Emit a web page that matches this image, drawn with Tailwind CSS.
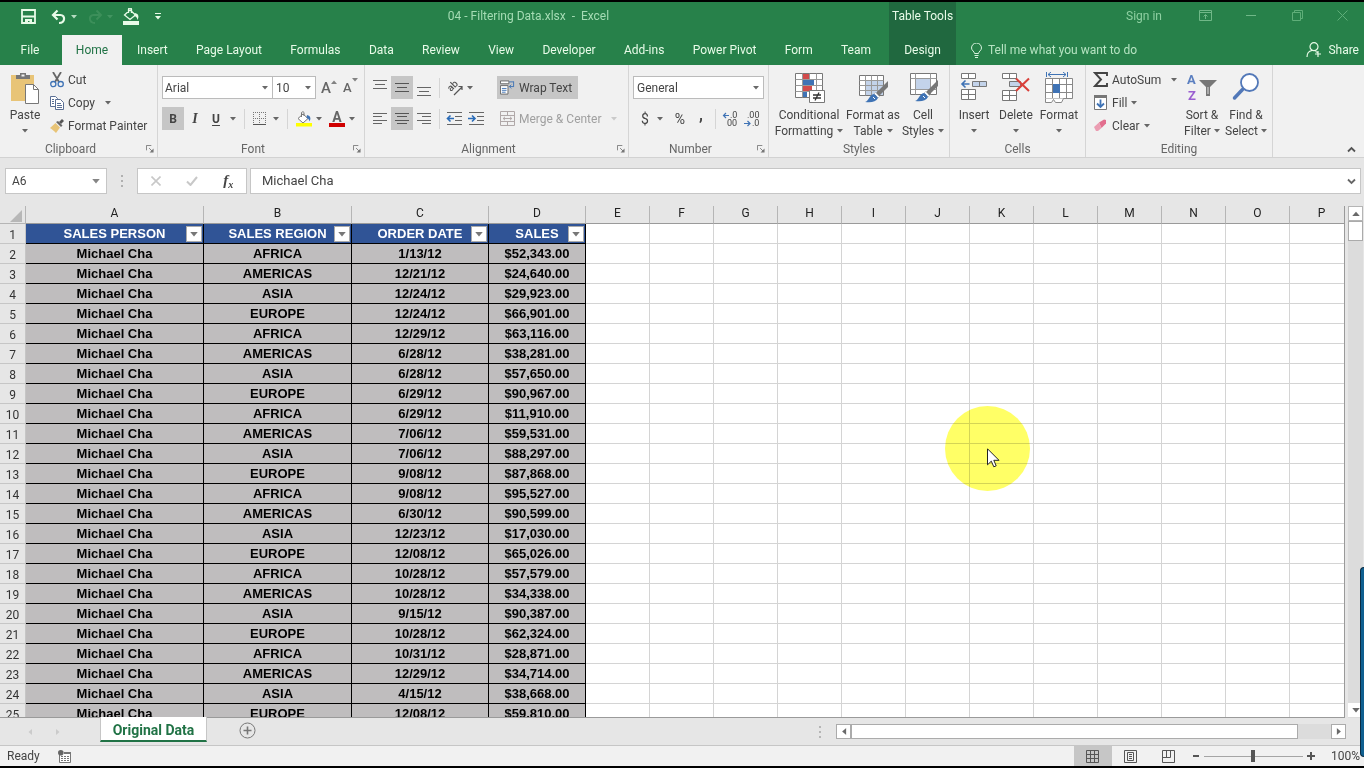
<!DOCTYPE html>
<html lang="en">
<head>
    <meta charset="UTF-8">
    <meta name="viewport" content="width=device-width, initial-scale=1.0">
    <title>04 - Filtering Data.xlsx - Excel</title>
    <script src="https://cdn.jsdelivr.net/npm/@tailwindcss/browser@4"></script>
</head>
<body class="relative flex h-screen flex-col overflow-hidden border-y-2 border-black bg-[#e6e6e6] font-['Roboto','Liberation_Sans',sans-serif] text-xs text-[#444]">
    <!-- Shared icons -->
    <svg class="hidden">
        <symbol id="caret" viewBox="0 0 6 4"><path d="M0 0h6L3 3.5z" fill="currentColor" fill-opacity=".8"/></symbol>
        <symbol id="launcher" viewBox="0 0 9 9"><path d="M.5 6V.5H6M3.5 3.5 7 7" fill="none" stroke="#777"/><path d="M8.500 4v4.500H4z" fill="#777"/></symbol>
        <symbol id="brush" viewBox="0 0 24 22"><path d="M23 0v6l-9 9-3-3z" fill="#777"/><path d="m10.500 11.500 4 4-1.500 1.500-4-4z" fill="#fff" stroke="#999" stroke-width=".5"/><path d="M9 13c2 1 3 2 4 4-2 4-7 5-13 4 4-1 4-7 9-8z" fill="#3f73b5"/><path d="m8 16 2 2" stroke="#fff"/></symbol>
    </svg>

    <!-- Title bar -->
    <header class="bg-[#27814a] text-[#d9f2df]">
        <div class="flex h-[33px]">
            <div class="flex w-[889px] items-center">
                <div class="flex w-[168px] items-center pb-1 pl-[18px]">
                    <button class="flex w-[22px] justify-center" aria-label="Save">
                        <svg class="h-[15px] w-[15px]" viewBox="0 0 15 15"><path d="M1 1h13v13H1zM1 7.500h13" fill="none" stroke="#e8fbe8" stroke-width="1.800"/><path d="M4 10h7v4H8.500v-2H7v2H4z" fill="#e8fbe8"/></svg>
                    </button>
                    <button class="ml-2.5 flex w-[30px] items-center justify-center gap-1" aria-label="Undo">
                        <svg class="h-4 w-4" viewBox="0 0 16 16"><path d="M2 6h7.500c5 0 5 8-1.500 8M6.500 1.500 2 6l4.500 4.500" fill="none" stroke="#e8fbe8" stroke-width="2.200"/></svg>
                        <svg class="h-1 w-1.5"><use href="#caret"/></svg>
                    </button>
                    <button class="ml-1.5 flex w-[30px] items-center justify-center gap-1 text-[#4a9866]" aria-label="Redo">
                        <svg class="h-4 w-4" viewBox="0 0 16 16"><path d="M14 6H6.500c-5 0-5 8 1.500 8M9.500 1.500 14 6l-4.500 4.500" fill="none" stroke="#3c8f5a" stroke-width="2"/></svg>
                        <svg class="h-1 w-1.5"><use href="#caret"/></svg>
                    </button>
                    <button class="ml-1.5 flex w-5 justify-center" aria-label="Fill color">
                        <svg class="h-[17px] w-4" viewBox="0 0 16 17"><path d="M7 2 1.500 7 7 11.500 12.500 7zM5.500 5V1.500a1.500 1.500 0 0 1 3 0V5" fill="none" stroke="#e8fbe8" stroke-width="1.300"/><path d="M12 5c4 1 4 4 2.500 7C14 9 12.500 8 11 8zM0 13h16v4H0z" fill="#e8fbe8"/></svg>
                    </button>
                    <button class="ml-2 flex w-5 justify-center" aria-label="Customize Quick Access Toolbar">
                        <svg class="h-[7px] w-1.5" viewBox="0 0 6 7"><path d="M0 0h6v1H0zM0 3h6L3 6.500z" fill="#e8fbe8"/></svg>
                    </button>
                </div>
                <h1 class="flex-1 pb-1.5 text-center whitespace-pre text-[#a5dcb4]">04 - Filtering Data.xlsx  -  Excel</h1>
            </div>
            <div class="w-[67px] bg-[#20683f] pt-1.5 text-center leading-4 text-[#e8fbe8]">Table Tools</div>
            <div class="flex flex-1 items-center justify-end pb-1.5 text-[#8fd0a2]">
                <button class="mr-5">Sign in</button>
                <button class="flex w-[46px] justify-center" aria-label="Ribbon display options">
                    <svg class="h-[11px] w-[13px]" viewBox="0 0 13 11"><path d="M.5.5h12v10H.5zM.5 2.500h12M6.500 9V5M4.500 6.500l2-2 2 2" fill="none" stroke="#70b888"/></svg>
                </button>
                <button class="flex w-[46px] justify-center" aria-label="Minimize"><span class="h-px w-2.5 bg-[#70b888]"></span></button>
                <button class="flex w-[46px] justify-center" aria-label="Restore">
                    <svg class="h-[11px] w-[11px]" viewBox="0 0 11 11"><path d="M.5 2.500h8v8h-8zM2.500 2.500v-2h8v8h-2" fill="none" stroke="#5fae79"/></svg>
                </button>
                <button class="flex w-11 justify-center" aria-label="Close">
                    <svg class="h-[11px] w-[11px]" viewBox="0 0 11 11"><path d="m.5.5 10 10m0-10-10 10" fill="none" stroke="#5fae79"/></svg>
                </button>
            </div>
        </div>

        <!-- Ribbon tabs -->
        <nav class="flex h-[30px] text-[#e8fbe8]">
            <button class="w-[60px]">File</button>
            <button class="ml-0.5 w-[60px] bg-[#f1f1f1] text-[#217346]">Home</button>
            <div class="flex w-[767px] justify-between pr-1 pl-px">
                <button class="px-3.5">Insert</button>
                <button class="px-3.5">Page Layout</button>
                <button class="px-3.5">Formulas</button>
                <button class="px-3.5">Data</button>
                <button class="px-3.5">Review</button>
                <button class="px-3.5">View</button>
                <button class="px-3.5">Developer</button>
                <button class="px-3.5">Add-ins</button>
                <button class="px-3.5">Power Pivot</button>
                <button class="px-3.5">Form</button>
                <button class="px-3.5">Team</button>
            </div>
            <button class="w-[67px] bg-[#20683f]">Design</button>
            <button class="ml-[15px] flex items-center gap-1.5 text-[#b5e3c1]">
                <svg class="h-[15px] w-[11px]" viewBox="0 0 11 15"><path d="M3.500 10.500c0-2-3-3-3-5.500a5 5 0 0 1 10 0c0 2.500-3 3.500-3 5.500zM3.500 12.500h4M4 14.500h3" fill="none" stroke="#d9f2df"/></svg>
                Tell me what you want to do
            </button>
            <button class="ml-auto flex items-center gap-1.5 pr-[5px]">
                <svg class="h-4 w-4" viewBox="0 0 16 16"><path d="M1 15c0-4 2-6 5-6.500M8 .7a4 4 0 1 1 0 8 4 4 0 0 1 0-8zM9.500 9.500l2 1M12 9v6M9 12h6" fill="none" stroke="#e8fbe8" stroke-width="1.200"/></svg>
                Share
            </button>
        </nav>
    </header>

    <!-- Ribbon -->
    <section class="flex h-[93px] border-b border-[#d2d2d2] bg-[#f1f1f1]">
        <!-- Clipboard -->
        <div class="flex w-[157px] flex-col">
            <div class="flex h-[76px] pt-[3px]">
                <button class="ml-1 flex w-[42px] flex-col items-center pt-1 leading-4">
                    <svg class="mb-[3px] h-8 w-7" viewBox="0 0 28 32"><path d="M0 3h23v26H0z" fill="#e8c477"/><path d="M5 7V3h4V1h6v2h4v4z" fill="#777"/><path d="M10.500 2.500h3v2h-3z" fill="#f1f1f1"/><path d="M14.500 12.500h8l5 5v14h-13z" fill="#fff" stroke="#777"/><path d="M22.500 12.500v5h5" fill="none" stroke="#777"/></svg>
                    Paste
                    <svg class="mt-1.5 h-1 w-1.5"><use href="#caret"/></svg>
                </button>
                <div class="ml-1 flex flex-col">
                    <button class="flex h-[23px] items-center gap-1">
                        <svg class="h-4 w-[14px]" viewBox="0 0 14 16"><path d="m3 0 6 10M11 0 5 10" stroke="#666" stroke-width="1.800"/><path d="M3.300 9.500a2.600 2.600 0 1 1 0 5.200 2.600 2.600 0 0 1 0-5.200zM10.700 9.500a2.600 2.600 0 1 1 0 5.200 2.600 2.600 0 0 1 0-5.200z" fill="none" stroke="#3f73b5" stroke-width="1.300"/></svg>
                        Cut
                    </button>
                    <button class="flex h-[23px] items-center gap-1">
                        <svg class="h-[14px] w-[14px]" viewBox="0 0 14 14"><path d="M.5.5h5l2 2v8h-7z" fill="#fff" stroke="#5a6f94"/><path d="M5.500 3.500h5l3 3v7h-8z" fill="#fff" stroke="#5a6f94"/><path d="M2 3.500h2M2 5.500h2M2 7.500h2M7 7.500h4M7 9.500h5M7 11.500h5" stroke="#5a6f94"/></svg>
                        Copy
                        <svg class="ml-1.5 h-1 w-1.5"><use href="#caret"/></svg>
                    </button>
                    <button class="flex h-[23px] items-center gap-1">
                        <svg class="h-[14px] w-[14px]" viewBox="0 0 14 14"><path d="m12 0 2 2-3 3-2-2z" fill="#555"/><path d="m6 3 2-1 4.500 4.500L11 8z" fill="#666"/><path d="M5.500 4 10 8.500 6 14C4 12 2 10 0 9z" fill="#e8c477"/></svg>
                        Format Painter
                    </button>
                </div>
            </div>
            <div class="flex h-4 items-center text-[#666]"><span class="flex-1 text-center">Clipboard</span><button class="w-4 pl-1.5" aria-label="Clipboard settings"><svg class="-ml-px h-2 w-2"><use href="#launcher"/></svg></button></div>
        </div>

        <!-- Font -->
        <div class="flex w-[207px] flex-col border-l border-[#d5d5d5]">
            <div class="flex h-[76px] flex-col gap-2 pt-[11px] pl-1">
                <div class="flex h-[23px] items-center">
                    <div class="relative flex h-[23px] w-[111px] items-center border border-[#bbb] bg-white">
                        <select class="w-full appearance-none pl-0.5" aria-label="Font"><option>Arial</option></select>
                        <svg class="pointer-events-none absolute right-1 h-1 w-1.5"><use href="#caret"/></svg>
                    </div>
                    <div class="relative flex h-[23px] w-[43px] items-center border border-l-0 border-[#bbb] bg-white">
                        <select class="w-full appearance-none pl-[3px]" aria-label="Font size"><option>10</option></select>
                        <svg class="pointer-events-none absolute right-1 h-1 w-1.5"><use href="#caret"/></svg>
                    </div>
                    <button class="ml-[5px] flex w-[22px] text-[15px] leading-5 font-medium text-[#666]" aria-label="Increase font size">A<svg class="mt-0.5 h-1 w-1.5 rotate-180"><use href="#caret"/></svg></button>
                    <button class="flex text-[13px] leading-5 font-medium text-[#666]" aria-label="Decrease font size">A<svg class="h-1 w-1.5"><use href="#caret"/></svg></button>
                </div>
                <div class="flex h-[23px] items-center">
                    <button class="h-[23px] w-[22px] bg-[#c6c6c6] font-bold">B</button>
                    <button class="w-[22px] font-['Liberation_Serif',serif] text-sm font-bold italic">I</button>
                    <button class="w-5 font-bold underline underline-offset-2">U</button>
                    <button class="flex w-[14px] justify-center" aria-label="Underline options"><svg class="h-1 w-1.5"><use href="#caret"/></svg></button>
                    <span class="ml-1 h-5 w-px bg-[#d5d5d5]"></span>
                    <button class="ml-2 flex w-[33px] items-center gap-1.5" aria-label="Borders">
                        <svg class="h-[14px] w-[14px]" viewBox="0 0 14 14"><path d="M.5 0v13M6.500 0v13M12.500 0v13M0 .5h13M0 6.500h13" stroke="#777" stroke-dasharray="1 1"/><path d="M0 12.500h13" stroke="#555"/></svg>
                        <svg class="h-1 w-1.5"><use href="#caret"/></svg>
                    </button>
                    <span class="ml-px h-5 w-px bg-[#d5d5d5]"></span>
                    <button class="ml-2 flex w-8 items-center gap-1" aria-label="Fill color">
                        <svg class="h-4 w-4" viewBox="0 0 16 16"><path d="M7 3 2 7.500 7 12l5-4.500z" fill="#fff" stroke="#777"/><path d="M5.500 6V1.500a1.500 1.500 0 0 1 2.500 0V5" fill="none" stroke="#777"/><path d="M11 4c4 1 4 4 2.500 6.500C13 8.500 12 7 10.500 7z" fill="#3f73b5"/><path d="M0 12h16v3.500H0z" fill="#ff0"/></svg>
                        <svg class="h-1 w-1.5"><use href="#caret"/></svg>
                    </button>
                    <button class="ml-px flex w-8 items-center gap-1" aria-label="Font color">
                        <span class="w-4 border-b-4 border-[#d00000] text-sm leading-3 font-bold text-[#666]">A</span>
                        <svg class="h-1 w-1.5"><use href="#caret"/></svg>
                    </button>
                </div>
            </div>
            <div class="flex h-4 items-center text-[#666]"><span class="flex-1 text-center">Font</span><button class="w-4 pl-1.5" aria-label="Font settings"><svg class="-ml-px h-2 w-2"><use href="#launcher"/></svg></button></div>
        </div>

        <!-- Alignment -->
        <div class="flex w-[264px] flex-col border-l border-[#d5d5d5]">
            <div class="flex h-[76px] flex-col gap-2 pt-[11px] pl-1">
                <div class="flex h-[23px] items-center">
                    <button class="flex h-[23px] w-[22px] items-center justify-center" aria-label="Top align"><svg class="mb-1.5 h-[13px] w-[14px]" viewBox="0 0 14 13"><path d="M0 2.500h14M2 6.500h10M0 10.500h14" stroke="#666"/></svg></button>
                    <button class="flex h-[23px] w-[22px] items-center justify-center bg-[#c6c6c6]" aria-label="Middle align"><svg class="h-[13px] w-[14px]" viewBox="0 0 14 13"><path d="M0 2.500h14M2 6.500h10M0 10.500h14" stroke="#555"/></svg></button>
                    <button class="flex h-[23px] w-[22px] items-center justify-center" aria-label="Bottom align"><svg class="mt-2 h-[13px] w-[14px]" viewBox="0 0 14 13"><path d="M0 2.500h14M2 6.500h10M0 10.500h14" stroke="#666"/></svg></button>
                    <span class="ml-1 h-5 w-px bg-[#d5d5d5]"></span>
                    <button class="ml-1.5 flex w-[45px] items-center gap-1" aria-label="Orientation">
                        <svg class="h-4 w-[17px] overflow-visible" viewBox="0 0 17 16"><text x="0" y="0" transform="translate(5 12) rotate(-45)" font-size="10" font-weight="500" fill="#555">ab</text><path d="m8 15 8-8M12.500 6.500H16V10" fill="none" stroke="#555" stroke-width="1.200"/></svg>
                        <svg class="h-1 w-1.5"><use href="#caret"/></svg>
                    </button>
                    <button class="ml-1.5 flex h-[23px] w-[81px] items-center gap-1 bg-[#c6c6c6] pl-[3px] whitespace-nowrap">
                        <svg class="h-[15px] w-[15px]" viewBox="0 0 16 15"><path d="M.5.5h9v3h-9zM.5 5.500h8v9h-8z" fill="#fff" stroke="#666"/><path d="M2 8.500h5M2 10.500h5M2 12.500h4M10 1.500h4.500" stroke="#3f73b5"/><path d="M14.500 1v5M15 6.500h-5m2-2-2 2 2 2" fill="none" stroke="#3f73b5"/></svg>
                        Wrap Text
                    </button>
                </div>
                <div class="flex h-[23px] items-center">
                    <button class="flex h-[23px] w-[22px] items-center justify-center" aria-label="Align left"><svg class="h-[13px] w-[14px]" viewBox="0 0 14 13"><path d="M0 1.500h14M0 4.500h9M0 8.500h14M0 11.500h9" stroke="#666"/></svg></button>
                    <button class="flex h-[23px] w-[22px] items-center justify-center bg-[#c6c6c6]" aria-label="Center"><svg class="h-[13px] w-[14px]" viewBox="0 0 14 13"><path d="M0 1.500h14M2 4.500h10M0 8.500h14M2 11.500h10" stroke="#555"/></svg></button>
                    <button class="flex h-[23px] w-[22px] items-center justify-center" aria-label="Align right"><svg class="h-[13px] w-[14px]" viewBox="0 0 14 13"><path d="M0 1.500h14M5 4.500h9M0 8.500h14M5 11.500h9" stroke="#666"/></svg></button>
                    <span class="ml-1 h-5 w-px bg-[#d5d5d5]"></span>
                    <button class="ml-1.5 flex w-[22px]" aria-label="Decrease indent"><svg class="h-[13px] w-4" viewBox="0 0 16 13"><path d="M1 .5h15M9 4.500h7M9 8.500h7M1 12.500h15" stroke="#666"/><path d="M1.500 6.500H8M4.500 3.500l-3 3 3 3" fill="none" stroke="#2b6cb8" stroke-width="1.600"/></svg></button>
                    <button class="flex w-[23px]" aria-label="Increase indent"><svg class="h-[13px] w-4" viewBox="0 0 16 13"><path d="M1 .5h15M9 4.500h7M9 8.500h7M1 12.500h15" stroke="#666"/><path d="M0 6.500h6.500M4 3.500l3 3-3 3" fill="none" stroke="#2b6cb8" stroke-width="1.600"/></svg></button>
                    <button class="ml-[9px] flex items-center gap-1 whitespace-nowrap text-[#a0a0a0]">
                        <svg class="h-[15px] w-[15px]" viewBox="0 0 15 15"><path d="M.5.5h14v14H.5zM.5 4.500h14M.5 10.500h14M7.500.5v4M7.500 10.500v4M3 7.500h9M5 5.800 3.200 7.500 5 9.200M10 5.800l1.800 1.700L10 9.200" fill="none" stroke="#b0a8a8"/></svg>
                        Merge &amp; Center
                        <svg class="ml-1.5 h-1 w-1.5 text-[#c0c0c0]"><use href="#caret"/></svg>
                    </button>
                </div>
            </div>
            <div class="flex h-4 items-center text-[#666]"><span class="flex-1 text-center">Alignment</span><button class="w-4 pl-1.5" aria-label="Alignment settings"><svg class="-ml-px h-2 w-2"><use href="#launcher"/></svg></button></div>
        </div>

        <!-- Number -->
        <div class="flex w-[140px] flex-col border-l border-[#d5d5d5]">
            <div class="flex h-[76px] flex-col gap-2 pt-[11px] pl-1">
                <div class="relative flex h-[23px] w-[131px] items-center border border-[#bbb] bg-white">
                    <select class="w-full appearance-none pl-[3px]" aria-label="Number format"><option>General</option></select>
                    <svg class="pointer-events-none absolute right-1 h-1 w-1.5"><use href="#caret"/></svg>
                </div>
                <div class="flex h-[23px] items-center">
                    <button class="flex w-9 items-center gap-2 pl-2 text-sm" aria-label="Accounting format">$<svg class="h-1 w-1.5"><use href="#caret"/></svg></button>
                    <button class="w-[22px] text-sm" aria-label="Percent style">%</button>
                    <button class="w-5 pb-2 text-base font-bold" aria-label="Comma style">,</button>
                    <span class="ml-1 h-5 w-px bg-[#d5d5d5]"></span>
                    <button class="ml-1.5 flex w-[22px]" aria-label="Increase decimal"><svg class="h-4 w-4" viewBox="0 0 16 16"><path d="M1 4.500h6M4 2 1.500 4.500 4 7" fill="none" stroke="#3f73b5" stroke-width="1.200"/><text x="8" y="7" font-size="9" fill="#444">.0</text><text x="5" y="15" font-size="9" fill="#444">00</text></svg></button>
                    <button class="flex" aria-label="Decrease decimal"><svg class="h-4 w-4" viewBox="0 0 16 16"><text x="3" y="7" font-size="9" fill="#444">.00</text><path d="M0 12.500h6M3.500 10 6 12.500 3.500 15" fill="none" stroke="#3f73b5" stroke-width="1.200"/><text x="8" y="15" font-size="9" fill="#444">.0</text></svg></button>
                </div>
            </div>
            <div class="flex h-4 items-center text-[#666]"><span class="flex-1 text-center">Number</span><button class="w-4 pl-1.5" aria-label="Number settings"><svg class="-ml-px h-2 w-2"><use href="#launcher"/></svg></button></div>
        </div>

        <!-- Styles -->
        <div class="flex w-[181px] flex-col border-l border-[#d5d5d5]">
            <div class="flex h-[76px] pt-[7px] pl-[5px] leading-4">
                <button class="flex w-[70px] flex-col items-center">
                    <svg class="mb-[3px] h-8 w-8" viewBox="0 0 32 32"><path d="M2.500 1.500h27v24h-27z" fill="#fff" stroke="#777"/><path d="M2.500 7.500h27M2.500 13.500h27M2.500 19.500h27M9.500 1.500v24M16.500 1.500v24M23.500 1.500v24" stroke="#999"/><path d="M10 2h6v5h-6zM10 14h9v5h-9z" fill="#d24b4b"/><path d="M10 8h11v5H10zM10 20h4v5h-4z" fill="#3f73b5"/><path d="M16.500 18.500h15v12h-15z" fill="#fff" stroke="#777"/><path d="M20 23h8M20 26h8M26 20.500l-4 8" stroke="#333" stroke-width="1.300"/></svg>
                    Conditional
                    <span class="flex items-center gap-1">Formatting <svg class="h-1 w-1.5"><use href="#caret"/></svg></span>
                </button>
                <button class="flex w-[58px] flex-col items-center">
                    <svg class="mb-[3px] h-8 w-8" viewBox="0 0 32 32"><path d="M2.500 3.500h24v20h-24z" fill="#fff" stroke="#777"/><path d="M9 9h17v14H9z" fill="#c3d3ea"/><path d="M2.500 8.500h24M2.500 13.500h24M2.500 18.500h24M8.500 3.500v20M14.500 3.500v20M20.500 3.500v20" stroke="#999"/><svg x="8" y="9" width="24" height="22"><use href="#brush"/></svg></svg>
                    Format as
                    <span class="flex items-center gap-1">Table <svg class="h-1 w-1.5"><use href="#caret"/></svg></span>
                </button>
                <button class="flex w-[42px] flex-col items-center">
                    <svg class="mb-[3px] h-8 w-8" viewBox="0 0 32 32"><path d="M3.500 1.500h26v21h-26z" fill="#fff" stroke="#777"/><path d="M3.500 6.500h26M3.500 17.500h26M8.500 1.500v21M23.500 1.500v21" stroke="#999"/><path d="M9 7h14v10H9z" fill="#c3d3ea"/><svg x="8" y="8" width="24" height="22"><use href="#brush"/></svg></svg>
                    Cell
                    <span class="flex items-center gap-1">Styles <svg class="h-1 w-1.5"><use href="#caret"/></svg></span>
                </button>
            </div>
            <div class="h-4 text-center leading-4 text-[#666]">Styles</div>
        </div>

        <!-- Cells -->
        <div class="flex w-[136px] flex-col border-l border-[#d5d5d5]">
            <div class="flex h-[76px] pt-[7px] pl-[3px] leading-4">
                <button class="flex w-[42px] flex-col items-center">
                    <svg class="mb-[3px] h-8 w-7" viewBox="0 0 28 32"><path d="M1.500 1.500h14v5h-14zM8.500 1.500v5M1.500 17.500h14v10h-14zM8.500 17.500v10M1.500 22.500h14" fill="#fff" stroke="#777"/><path d="M12.500 9.500h14v5h-14zM19.500 9.500v5" fill="#c3d3ea" stroke="#777"/><path d="M2 12h7.500M5.500 8.500 2 12l3.500 3.500" fill="none" stroke="#3f73b5" stroke-width="1.600"/></svg>
                    Insert
                    <svg class="mt-1.5 h-1 w-1.5"><use href="#caret"/></svg>
                </button>
                <button class="flex w-[42px] flex-col items-center">
                    <svg class="mb-[3px] h-8 w-7" viewBox="0 0 28 32"><path d="M.5 1.500h14v5H.5zM7.500 1.500v5M.5 18.500h14v10H.5zM7.500 18.500v10M.5 23.500h14" fill="#fff" stroke="#777"/><path d="M7.500 9.500h11v5h-11z" fill="#c3d3ea" stroke="#777"/><path d="M14 6.500 27 19M27 6.500 14 19" stroke="#d9403a" stroke-width="2"/></svg>
                    Delete
                    <svg class="mt-1.5 h-1 w-1.5"><use href="#caret"/></svg>
                </button>
                <button class="flex w-11 flex-col items-center">
                    <svg class="mb-[3px] h-8 w-7" viewBox="0 0 28 32"><path d="M1.500 0v5M22.500 0v5M3 2.500h18M6 0 3 2.500 6 5M18 0l3 2.500L18 5" fill="none" stroke="#3f73b5"/><path d="M.5 6.500h27v20H.5zM.5 12.500h27M.5 20.500h27M7.500 6.500v20M14.500 6.500v20M21.500 6.500v20" fill="#fff" stroke="#888"/><path d="M8 12h7v9H8z" fill="#3f73b5"/><path d="M.5 26.500v4h6l2-3 2 3h6l2-4" fill="#fff" stroke="#888"/></svg>
                    Format
                    <svg class="mt-1.5 h-1 w-1.5"><use href="#caret"/></svg>
                </button>
            </div>
            <div class="h-4 text-center leading-4 text-[#666]">Cells</div>
        </div>

        <!-- Editing -->
        <div class="flex w-[188px] flex-col border-x border-[#d5d5d5]">
            <div class="flex h-[76px] pt-[3px] pl-[7px]">
                <div class="flex w-[84px] flex-col">
                    <button class="flex h-[23px] items-center gap-1">
                        <svg class="h-[15px] w-[15px]" viewBox="0 0 15 15"><path d="M14 4V1H2l6 6.500L2 14h12v-3" fill="none" stroke="#444" stroke-width="1.900"/></svg>
                        AutoSum
                        <svg class="ml-auto h-1 w-1.5"><use href="#caret"/></svg>
                    </button>
                    <button class="flex h-[23px] items-center gap-1">
                        <svg class="h-[15px] w-[15px]" viewBox="0 0 15 15"><path d="M1.500.5h12v14h-12z" fill="#fff" stroke="#777"/><path d="M1 0h13v3H1z" fill="#777"/><path d="M7.500 4.500V12M4 8.500 7.500 12 11 8.500" fill="none" stroke="#3f73b5" stroke-width="1.800"/></svg>
                        Fill
                        <svg class="h-1 w-1.5"><use href="#caret"/></svg>
                    </button>
                    <button class="flex h-[23px] items-center gap-1">
                        <svg class="h-[13px] w-[15px]" viewBox="0 0 15 13"><path d="m6 3.500 5-3 2 .5v3.500L8.500 9z" fill="#e26e8e"/><path d="M6 3.500 8.500 9 5 12H3L1 8z" fill="#eb9db2"/></svg>
                        Clear
                        <svg class="h-1 w-1.5"><use href="#caret"/></svg>
                    </button>
                </div>
                <button class="ml-[3px] flex w-11 flex-col items-center pt-1 leading-4">
                    <svg class="mb-[3px] h-8 w-[30px]" viewBox="0 0 30 32"><text x="0" y="12" font-size="13" font-weight="700" fill="#5b7fc0">A</text><text x="1" y="28" font-size="13" font-weight="700" fill="#9a5fd0">Z</text><path d="M12 8h18l-7 7v9h-4v-9z" fill="#777"/><path d="M20.500 15h1v7h-1z" fill="#ddd"/></svg>
                    <span class="whitespace-nowrap">Sort &amp;</span>
                    <span class="flex items-center gap-[3px]">Filter <svg class="h-1 w-1.5"><use href="#caret"/></svg></span>
                </button>
                <button class="flex w-11 flex-col items-center pt-1 leading-4">
                    <svg class="mb-[3px] h-8 w-7" viewBox="0 0 28 32"><path d="m10.500 17.500-8 8.500" stroke="#5278b8" stroke-width="3.500" stroke-linecap="round"/><circle cx="17.500" cy="10.500" r="8.500" fill="#fff" stroke="#5278b8" stroke-width="1.800"/></svg>
                    <span class="whitespace-nowrap">Find &amp;</span>
                    <span class="flex items-center gap-[3px]">Select <svg class="h-1 w-1.5"><use href="#caret"/></svg></span>
                </button>
            </div>
            <div class="h-4 text-center leading-4 text-[#666]">Editing</div>
        </div>
        <button class="mt-auto mr-2 mb-1 ml-auto" aria-label="Collapse ribbon"><svg class="h-[7px] w-[9px]" viewBox="0 0 9 7"><path d="m1 5.500 3.500-3.500L8 5.500" fill="none" stroke="#555" stroke-width="1.800"/></svg></button>
    </section>

    <!-- Formula bar -->
    <section class="flex h-12 pt-2.5 pr-[3px] pl-[5px]">
        <div class="flex h-[26px] w-[102px] items-center border border-[#c6c6c6] bg-white">
            <input class="w-20 flex-1 pl-1.5 outline-none" aria-label="Name box" value="A6">
            <button class="px-1.5" aria-label="Name list"><svg class="h-[5px] w-2 text-[#666]"><use href="#caret"/></svg></button>
        </div>
        <svg class="mx-[13px] mt-[7px] h-3 w-1" viewBox="0 0 4 12"><path d="M1 0h2v2H1zM1 5h2v2H1zM1 10h2v2H1z" fill="#b0b0b0"/></svg>
        <div class="flex h-[26px] w-[110px] items-center justify-around border border-[#c6c6c6] bg-white">
            <button aria-label="Cancel"><svg class="h-[10px] w-[10px]" viewBox="0 0 10 10"><path d="m.5.5 9 9m0-9-9 9" stroke="#c8c8c8" stroke-width="1.600"/></svg></button>
            <button aria-label="Enter"><svg class="h-[10px] w-3" viewBox="0 0 12 10"><path d="m1 5.500 3.500 3.500L11 1" fill="none" stroke="#c8c8c8" stroke-width="2"/></svg></button>
            <button class="pb-0.5 font-['Liberation_Serif',serif] text-[15px] leading-4 font-bold italic" aria-label="Insert function">f<sub class="text-[10px]">x</sub></button>
        </div>
        <div class="ml-[3px] flex h-[26px] flex-1 items-center border border-[#c6c6c6] bg-white">
            <input class="flex-1 pl-[11px] text-[13px] outline-none" aria-label="Formula bar" value="Michael Cha">
            <button class="pr-1" aria-label="Expand formula bar"><svg class="h-[7px] w-[9px]" viewBox="0 0 9 7"><path d="m1 1.500 3.500 3.500L8 1.500" fill="none" stroke="#666" stroke-width="1.800"/></svg></button>
        </div>
    </section>

    <!-- Sheet -->
    <main class="flex min-h-0 flex-1">
        <div class="min-w-0 flex-1 overflow-hidden border-r border-b border-[#9a9a9a] bg-white">
            <table class="w-[1353px] table-fixed border-separate border-spacing-0">
                <thead>
                    <tr id="columnLetters">
                        <th class="h-[18px] w-[26px] border-r border-b border-[#b5b5b5] bg-[#e6e6e6] p-0"><svg class="mt-[3px] ml-auto mr-[3px] h-3 w-3" viewBox="0 0 12 12"><path d="M12 0v12H0z" fill="#b7b7b7"/></svg></th>
                    </tr>
                </thead>
                <tbody id="sheetRows"></tbody>
            </table>
        </div>
        <div class="mr-px ml-[3px] flex w-[15px] flex-col bg-[#dcdcdc]">
            <button class="flex h-[15px] items-center justify-center border border-[#b5b5b5] bg-white" aria-label="Scroll up"><svg class="h-[5px] w-2 rotate-180"><use href="#caret"/></svg></button>
            <div class="h-5 border border-[#ababab] bg-white"></div>
            <button class="mt-auto mb-px flex h-[14px] items-center justify-center bg-white" aria-label="Scroll down"><svg class="h-[5px] w-2"><use href="#caret"/></svg></button>
        </div>
    </main>

    <!-- Sheet tabs -->
    <section class="flex h-[27px]">
        <div class="flex w-[100px] items-center gap-[22px] pl-[27px] text-[#c4c4c4]">
            <button aria-label="Previous sheet"><svg class="h-1 w-1.5 rotate-90"><use href="#caret"/></svg></button>
            <button aria-label="Next sheet"><svg class="h-1 w-1.5 -rotate-90"><use href="#caret"/></svg></button>
        </div>
        <button class="-mt-px h-[25px] w-[107px] border-r border-b-2 border-l border-[#c6c6c6] border-b-[#217346] bg-white pt-0.5 text-sm leading-4 font-bold text-[#217346]">Original Data</button>
        <button class="mb-0.5 ml-8" aria-label="New sheet"><svg class="h-[17px] w-[17px]" viewBox="0 0 17 17"><circle cx="8.500" cy="8.500" r="7.500" fill="none" stroke="#777"/><path d="M4.500 8.500h8M8.500 4.500v8" stroke="#777" stroke-width="1.600"/></svg></button>
        <div class="mt-1.5 mr-[18px] ml-auto flex h-4 w-[528px]">
            <svg class="mt-0.5 mr-3.5 h-3 w-1" viewBox="0 0 4 12"><path d="M1 0h2v2H1zM1 5h2v2H1zM1 10h2v2H1z" fill="#b5b5b5"/></svg>
            <button class="flex h-[15px] w-[15px] items-center justify-center border border-[#ababab] bg-white" aria-label="Scroll left"><svg class="h-[5px] w-2 rotate-90"><use href="#caret"/></svg></button>
            <div class="flex h-[15px] flex-1 bg-[#dcdcdc]">
                <div class="w-[447px] border border-[#ababab] bg-white"></div>
            </div>
            <button class="flex h-[15px] w-[15px] items-center justify-center border border-[#ababab] bg-white" aria-label="Scroll right"><svg class="h-[5px] w-2 -rotate-90"><use href="#caret"/></svg></button>
        </div>
    </section>

    <!-- Status bar -->
    <footer class="flex h-[21px] items-center border-t border-[#c6c6c6] bg-[#f1f1f1] pl-[7px]">
        <span>Ready</span>
        <button class="ml-[18px]" aria-label="Record macro"><svg class="h-[13px] w-[13px]" viewBox="0 0 13 13"><path d="M1.500 4v8.500h11v-10H6" fill="#fff" stroke="#777"/><path d="M6 2h7v2H6z" fill="#777"/><circle cx="2.800" cy="2.800" r="2.800" fill="#666"/><path d="M3 6.500h8M3 8.500h8M3 10.500h8" stroke="#777" stroke-dasharray="2 1"/></svg></button>
        <div class="ml-auto flex h-full items-center">
            <button class="flex h-full w-[38px] items-center justify-center bg-[#c6c6c6]" aria-label="Normal view"><svg class="h-[13px] w-[13px]" viewBox="0 0 13 13"><path d="M.5.5h12v12H.5zM4.500.5v12M8.500.5v12M.5 4.500h12M.5 8.500h12" fill="none" stroke="#555"/></svg></button>
            <button class="flex w-[38px] items-center justify-center" aria-label="Page layout view"><svg class="h-[13px] w-[13px]" viewBox="0 0 13 13"><path d="M.5.5h12v12H.5zM3.500 2.500h6v8h-6zM5 4.500h3M5 6.500h3M5 8.500h3" fill="none" stroke="#555"/></svg></button>
            <button class="flex w-[38px] items-center justify-center" aria-label="Page break preview"><svg class="h-[13px] w-[13px]" viewBox="0 0 13 13"><path d="M.5.5h12v12H.5zM4.500.5v7M8.500.5v7M.5 7.500h8" fill="none" stroke="#555"/></svg></button>
            <button class="flex w-4 justify-center" aria-label="Zoom out"><span class="h-0.5 w-1.5 bg-[#555]"></span></button>
            <input type="range" min="10" max="190" value="100" aria-label="Zoom" class="h-3 w-[99px] appearance-none bg-[linear-gradient(#a5a5a5,#a5a5a5)] bg-[length:100%_1px] bg-center bg-no-repeat [&::-webkit-slider-thumb]:h-3 [&::-webkit-slider-thumb]:w-1 [&::-webkit-slider-thumb]:appearance-none [&::-webkit-slider-thumb]:bg-[#555]">
            <button class="flex w-4 justify-center" aria-label="Zoom in"><svg class="h-2 w-2" viewBox="0 0 8 8"><path d="M0 4h8M4 0v8" stroke="#555" stroke-width="2"/></svg></button>
            <button class="mr-1 ml-3">100%</button>
        </div>
    </footer>

    <!-- Pointer with highlight -->
    <div class="pointer-events-none absolute top-[404px] left-[945px] h-[85px] w-[85px] rounded-full bg-[#ffff66] mix-blend-multiply"></div>
    <svg class="pointer-events-none absolute top-[446px] left-[987px] h-[20px] w-[13px]" viewBox="0 0 13 20"><path d="M.5.8v16l3.800-3.600 2.500 5.600 2.400-1-2.400-5.500H12z" fill="#fff" stroke="#222"/></svg>

    <!-- Docked panel edge -->
    <div class="absolute top-[565px] right-0 h-[190px] w-1 rounded-l border border-r-0 border-[#0a2c44] bg-[#0f5f90]"></div>

    <script>
        const columns = [
            ['A', 178], ['B', 148], ['C', 137], ['D', 97],
            ['E', 64], ['F', 64], ['G', 64], ['H', 64], ['I', 64], ['J', 64],
            ['K', 64], ['L', 64], ['M', 64], ['N', 64], ['O', 64], ['P', 64]
        ];

        const headings = ['SALES PERSON', 'SALES REGION', 'ORDER DATE', 'SALES'];

        const sales = [
            ['AFRICA', '1/13/12', '$52,343.00'],
            ['AMERICAS', '12/21/12', '$24,640.00'],
            ['ASIA', '12/24/12', '$29,923.00'],
            ['EUROPE', '12/24/12', '$66,901.00'],
            ['AFRICA', '12/29/12', '$63,116.00'],
            ['AMERICAS', '6/28/12', '$38,281.00'],
            ['ASIA', '6/28/12', '$57,650.00'],
            ['EUROPE', '6/29/12', '$90,967.00'],
            ['AFRICA', '6/29/12', '$11,910.00'],
            ['AMERICAS', '7/06/12', '$59,531.00'],
            ['ASIA', '7/06/12', '$88,297.00'],
            ['EUROPE', '9/08/12', '$87,868.00'],
            ['AFRICA', '9/08/12', '$95,527.00'],
            ['AMERICAS', '6/30/12', '$90,599.00'],
            ['ASIA', '12/23/12', '$17,030.00'],
            ['EUROPE', '12/08/12', '$65,026.00'],
            ['AFRICA', '10/28/12', '$57,579.00'],
            ['AMERICAS', '10/28/12', '$34,338.00'],
            ['ASIA', '9/15/12', '$90,387.00'],
            ['EUROPE', '10/28/12', '$62,324.00'],
            ['AFRICA', '10/31/12', '$28,871.00'],
            ['AMERICAS', '12/29/12', '$34,714.00'],
            ['ASIA', '4/15/12', '$38,668.00'],
            ['EUROPE', '12/08/12', '$59,810.00']
        ];

        const letters = document.getElementById('columnLetters');
        columns.forEach(([letter, width]) => {
            letters.innerHTML += `<th style="width:${width}px" class="h-[18px] border-r border-b border-[#b5b5b5] border-b-[#9a9a9a] bg-[#e6e6e6] p-0 pb-0.5 leading-[15px] font-normal text-[#222]">${letter}</th>`;
        });

        const rowNumber = n => `<th class="h-5 border-r border-b border-[#c6c6c6] bg-[#e6e6e6] p-0 pt-0.5 leading-4 font-normal text-[#333]">${n}</th>`;
        const blanks = '<td class="h-5 border-r border-b border-[#d4d4d4] p-0"></td>'.repeat(12);

        let rows = '<tr>' + rowNumber(1);
        headings.forEach(text => {
            rows += `<td class="relative h-5 border-r border-b border-black bg-[#305496] p-0 text-center font-['Liberation_Sans',sans-serif] text-[13px] leading-4 font-bold text-white">${text}
                <button class="absolute right-px bottom-px flex h-4 w-4 items-center justify-center border border-[#ababab] bg-white text-[#555]" aria-label="Filter ${text}"><svg class="h-[5px] w-2"><use href="#caret"/></svg></button></td>`;
        });
        rows += blanks + '</tr>';

        sales.forEach((sale, i) => {
            rows += '<tr>' + rowNumber(i + 2);
            ['Michael Cha', ...sale].forEach(text => {
                rows += `<td class="h-5 border-r border-b border-black bg-[#bfbdbe] p-0 text-center font-['Liberation_Sans',sans-serif] text-[13px] leading-4 font-bold text-black">${text}</td>`;
            });
            rows += blanks + '</tr>';
        });
        document.getElementById('sheetRows').innerHTML = rows;
    </script>
</body>
</html>
